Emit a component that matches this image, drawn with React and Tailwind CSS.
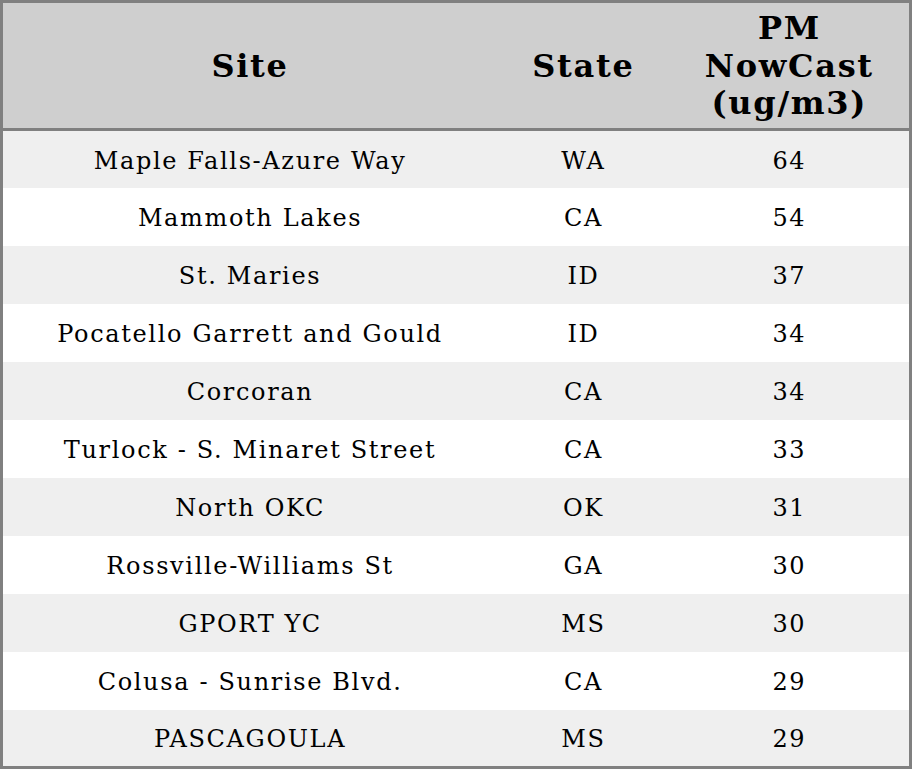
import React from 'react';

const rows = [
  ['Maple Falls-Azure Way', 'WA', 64],
  ['Mammoth Lakes', 'CA', 54],
  ['St. Maries', 'ID', 37],
  ['Pocatello Garrett and Gould', 'ID', 34],
  ['Corcoran', 'CA', 34],
  ['Turlock - S. Minaret Street', 'CA', 33],
  ['North OKC', 'OK', 31],
  ['Rossville-Williams St', 'GA', 30],
  ['GPORT YC', 'MS', 30],
  ['Colusa - Sunrise Blvd.', 'CA', 29],
  ['PASCAGOULA', 'MS', 29],
];

export default function App() {
  return (
    <div className="w-[912px] h-[769px] bg-white font-['DejaVu_Serif',serif] text-black">
      <table className="w-full h-[769px] border-collapse border-[3px] border-[#808080]">
        <colgroup>
          <col className="w-[494px]" />
          <col className="w-[172px]" />
          <col className="w-[240px]" />
        </colgroup>
        <thead>
          {/* Header */}
          <tr className="bg-[#cfcfcf] h-[128px] border-b-[3px] border-[#808080] text-[32px] font-bold leading-[37.5px] tracking-[1.7px]">
            <th className="text-center pt-[2px]">Site</th>
            <th className="text-center pt-[2px]">State</th>
            <th className="text-center pt-[2px]">
              PM
              <br />
              NowCast
              <br />
              (ug/m3)
            </th>
          </tr>
        </thead>
        <tbody>
          {rows.map(([site, state, value], i) => (
            <tr
              key={i}
              className={`h-[57px] text-[24px] tracking-[1.65px] ${i % 2 === 0 ? 'bg-[#efefef]' : 'bg-white'}`}
            >
              <td className="text-center pt-[3px]">{site}</td>
              <td className="text-center pt-[3px]">{state}</td>
              <td className="text-center pt-[3px]">{value}</td>
            </tr>
          ))}
        </tbody>
      </table>
    </div>
  );
}
